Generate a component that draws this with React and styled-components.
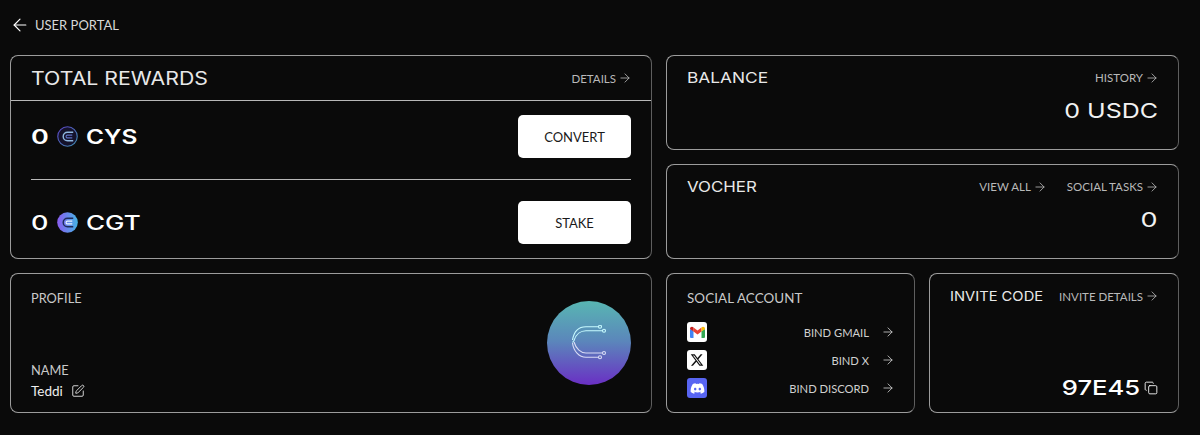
import { createGlobalStyle, styled } from "styled-components";
import { ArrowLeft, ArrowRight, Copy, SquarePen } from "lucide-react";
import { FaDiscord } from "react-icons/fa";
import { FaXTwitter } from "react-icons/fa6";

const GlobalStyle = createGlobalStyle`
  html, body {
    margin: 0;
    background: #0a0a0a;
  }
  body {
    color: #fff;
    font-family: "Lato", "Liberation Sans", sans-serif;
  }
`;

const Page = styled.div`
  width: 1200px;
  height: 435px;
  overflow: hidden;
  padding: 0 21px 0 10px;
  box-sizing: border-box;
`;

const TopBar = styled.div`
  height: 55px;
  display: flex;
  align-items: center;
  gap: 5px;
  padding-bottom: 5px;
  box-sizing: border-box;
  font-size: 13px;
  color: #d8d8d8;
`;

const Grid = styled.div`
  display: grid;
  grid-template-columns: 642px 249px 250px;
  grid-template-rows: 95px 95px 140px;
  column-gap: 14px;
  row-gap: 14px;
`;

const Card = styled.section`
  border: 1px solid #9c9c9c;
  border-right-color: #5e5e5e;
  border-radius: 8px;
  box-sizing: border-box;
  min-width: 0;
  grid-column: ${(p) => p.$column || "auto"};
  grid-row: ${(p) => p.$row || "auto"};
  padding: ${(p) => p.$padding || "0"};
  display: flex;
  flex-direction: column;
`;

const Row = styled.div`
  display: flex;
  align-items: center;
  justify-content: space-between;
`;

const RewardsHeader = styled(Row)`
  height: 44px;
  padding: 0 20px;
  border-bottom: 1px solid #b8b8b8;
`;

/* the display face in the reference is an extended sans, so stretch Inter */
const Wide = styled.span`
  display: inline-block;
  font-family: "Inter", sans-serif;
  font-weight: ${(p) => p.$weight || 400};
  font-size: ${(p) => p.$size || 20}px;
  white-space: nowrap;
  transform: scaleX(${(p) => p.$scale || 1.25});
  transform-origin: ${(p) => p.$origin || "left"} center;
`;

const Title = styled(Wide)`
  color: #e8e8e8;
`;

const LinkRow = styled.div`
  display: flex;
  gap: 21px;
`;

const TextLink = styled.a`
  display: inline-flex;
  align-items: center;
  gap: 2px;
  font-size: 11.5px;
  color: #b9b9b9;
  white-space: nowrap;
`;

const Arrow = styled(ArrowRight).attrs({ size: 14, strokeWidth: 1.4 })`
  margin-right: -1px;
`;

const RewardList = styled.div`
  flex: 1;
  margin: 0 20px;
  display: flex;
  flex-direction: column;
`;

const RewardRow = styled(Row)`
  padding: 14px 0 21px;
  & + & {
    border-top: 1px solid #b8b8b8;
    padding: 21px 0 13px;
  }
`;

const Amount = styled.div`
  display: flex;
  align-items: center;
  gap: 8px;
  color: #fff;
`;

const ZeroSlot = styled.div`
  width: 18px;
`;

const ActionButton = styled.button`
  width: 113px;
  height: 43px;
  border: 0;
  border-radius: 5px;
  background: #fff;
  color: #1a1a1a;
  font-family: inherit;
  font-size: 13px;
`;

const BalanceCard = styled(Card)`
  padding: 12px 20px;
`;

const BigValue = styled.div`
  margin-top: 12px;
  text-align: right;
  color: #f2f2f2;
`;

const Label = styled.div`
  font-size: ${(p) => p.$size || 12.8}px;
  letter-spacing: ${(p) => p.$spacing || 0}px;
  color: #c9c9c9;
`;

const ProfileCard = styled(Card)`
  flex-direction: row;
  justify-content: space-between;
  padding: 16px 20px 13px;
`;

const ProfileInfo = styled.div`
  display: flex;
  flex-direction: column;
  justify-content: space-between;
`;

const NameBlock = styled.div`
  display: flex;
  flex-direction: column;
  gap: 5px;
`;

const NameRow = styled.div`
  display: flex;
  align-items: center;
  gap: 8px;
  font-size: 13.5px;
  color: #eee;
`;

const Avatar = styled.div`
  width: 84px;
  height: 84px;
  margin-top: 11px;
  border-radius: 50%;
  background: linear-gradient(180deg, #58b6b2 0%, #5b86bb 48%, #6a2fc4 100%);
  display: flex;
  align-items: center;
  justify-content: center;
`;

const SocialList = styled.div`
  margin-top: 16px;
  display: flex;
  flex-direction: column;
  gap: 8px;
`;

const SocialRow = styled(Row)`
  font-size: 11.2px;
  color: #d0d0d0;
`;

const SocialIcon = styled.div`
  width: 20px;
  height: 20px;
  border-radius: 3px;
  background: ${(p) => p.$bg || "#fff"};
  color: ${(p) => p.$fg || "#111"};
  display: flex;
  align-items: center;
  justify-content: center;
`;

const BindLink = styled.div`
  display: flex;
  align-items: center;
  gap: 12px;
`;

const CodeRow = styled.div`
  margin-top: auto;
  display: flex;
  justify-content: flex-end;
  align-items: center;
  gap: 4px;
  color: #fff;
`;

function CoinMark({ cys }) {
  return (
    <svg width="21" height="21" viewBox="0 0 22 22">
      <defs>
        <linearGradient id="cgt" x1="0" y1="0" x2="1" y2="0">
          <stop offset="0" stopColor="#8a5cf0" />
          <stop offset="1" stopColor="#45b4e6" />
        </linearGradient>
        <linearGradient id="cys" x1="0" y1="0" x2="1" y2="1">
          <stop offset="0" stopColor="#5a3fc0" />
          <stop offset="1" stopColor="#3f8fb0" />
        </linearGradient>
      </defs>
      {cys ? (
        <circle cx="11" cy="11" r="10.2" fill="#14122b" stroke="url(#cys)" strokeWidth="1.2" />
      ) : (
        <circle cx="11" cy="11" r="10.8" fill="url(#cgt)" />
      )}
      <path
        d="M17 6.500h-6a4.500 4.500 0 0 0 0 9h6"
        fill="none"
        stroke={cys ? "#8fb8e0" : "#1f2c5c"}
        strokeWidth="1.5"
      />
      <path
        d="M16 9.500h-5a1.500 1.500 0 0 0 0 3h5"
        fill="none"
        stroke={cys ? "#5b6fc0" : "#e8f4ff"}
        strokeWidth="1.2"
      />
    </svg>
  );
}

function AvatarMark() {
  return (
    <svg width="36" height="36" viewBox="0 0 36 36" fill="none" strokeWidth="1.1">
      <g stroke="#c8fbff">
        <path d="M27.500 1.700H15C8 1.700 3 6 1.500 15" />
        <path d="M31.500 5.700H15C10 5.700 5 9 3 15.500L1.500 17.500" />
        <circle cx="29" cy="1.700" r="1.500" />
        <circle cx="33" cy="5.700" r="1.500" />
      </g>
      <g stroke="#d9dcf5">
        <path d="M1.500 18C2.500 26 8 32.300 15 32.300H27.500" />
        <path d="M3 17C5 24 10 28 15 28H31.500" />
        <circle cx="33" cy="28" r="1.500" />
        <circle cx="29" cy="32.300" r="1.500" />
      </g>
    </svg>
  );
}

function GmailMark() {
  return (
    <svg width="15" height="12" viewBox="0 0 15 12">
      <path d="M0 3v8a1 1 0 0 0 1 1h2.500V5z" fill="#4285f4" />
      <path d="M15 3v8a1 1 0 0 1-1 1h-2.500V5z" fill="#34a853" />
      <path d="M11.500 1.500 7.500 4.500 3.500 1.500V5.500l4 3 4-3z" fill="#ea4335" />
      <path d="M0 3C0 1 2 0 3.500 1.500V5.500z" fill="#c5221f" />
      <path d="M15 3c0-2-2-3-3.500-1.500V5.500z" fill="#fbbc04" />
    </svg>
  );
}

export default function App() {
  return (
    <>
      <GlobalStyle />
      <Page>
        <TopBar>
          <ArrowLeft size={20} strokeWidth={1.4} color="#fff" />
          USER PORTAL
        </TopBar>
        <Grid>
          <Card $column="1" $row="1 / 3">
            <RewardsHeader>
              <Title $size={18.5} $scale={1.15}>TOTAL REWARDS</Title>
              <TextLink>DETAILS <Arrow /></TextLink>
            </RewardsHeader>
            <RewardList>
              <RewardRow>
                <Amount>
                  <ZeroSlot><Wide $weight={600} $scale={1.35}>0</Wide></ZeroSlot>
                  <CoinMark cys />
                  <Wide $weight={600} $scale={1.22}>CYS</Wide>
                </Amount>
                <ActionButton>CONVERT</ActionButton>
              </RewardRow>
              <RewardRow>
                <Amount>
                  <ZeroSlot><Wide $weight={500} $scale={1.35}>0</Wide></ZeroSlot>
                  <CoinMark />
                  <Wide $weight={500} $scale={1.3}>CGT</Wide>
                </Amount>
                <ActionButton>STAKE</ActionButton>
              </RewardRow>
            </RewardList>
          </Card>

          <BalanceCard $column="2 / 4" $row="1">
            <Row>
              <Title $size={15} $scale={1.155}>BALANCE</Title>
              <TextLink>HISTORY <Arrow /></TextLink>
            </Row>
            <BigValue><Wide $origin="right">0 USDC</Wide></BigValue>
          </BalanceCard>

          <BalanceCard $column="2 / 4" $row="2">
            <Row>
              <Title $size={15} $scale={1.125}>VOCHER</Title>
              <LinkRow>
                <TextLink>VIEW ALL <Arrow /></TextLink>
                <TextLink>SOCIAL TASKS <Arrow /></TextLink>
              </LinkRow>
            </Row>
            <BigValue><Wide $origin="right" $scale={1.35}>0</Wide></BigValue>
          </BalanceCard>

          <ProfileCard $column="1" $row="3">
            <ProfileInfo>
              <Label>PROFILE</Label>
              <NameBlock>
                <Label>NAME</Label>
                <NameRow>
                  Teddi <SquarePen size={14} strokeWidth={1.5} />
                </NameRow>
              </NameBlock>
            </ProfileInfo>
            <Avatar>
              <AvatarMark />
            </Avatar>
          </ProfileCard>

          <Card $column="2" $row="3" $padding="16px 20px 13px">
            <Label $size={13.4} $spacing={0.1}>SOCIAL ACCOUNT</Label>
            <SocialList>
              <SocialRow>
                <SocialIcon><GmailMark /></SocialIcon>
                <BindLink>BIND GMAIL <Arrow /></BindLink>
              </SocialRow>
              <SocialRow>
                <SocialIcon><FaXTwitter size={14} /></SocialIcon>
                <BindLink>BIND X <Arrow /></BindLink>
              </SocialRow>
              <SocialRow>
                <SocialIcon $bg="#5865f2" $fg="#fff"><FaDiscord size={15} /></SocialIcon>
                <BindLink>BIND DISCORD <Arrow /></BindLink>
              </SocialRow>
            </SocialList>
          </Card>

          <Card $column="3" $row="3" $padding="14px 20px 12px">
            <Row>
              <Title $size={13.5} $scale={1.09}>INVITE CODE</Title>
              <TextLink>INVITE DETAILS <Arrow /></TextLink>
            </Row>
            <CodeRow>
              <Wide $origin="right" $weight={500} $scale={1.28}>97E45</Wide>
              <Copy size={14} strokeWidth={1.5} />
            </CodeRow>
          </Card>
        </Grid>
      </Page>
    </>
  );
}
